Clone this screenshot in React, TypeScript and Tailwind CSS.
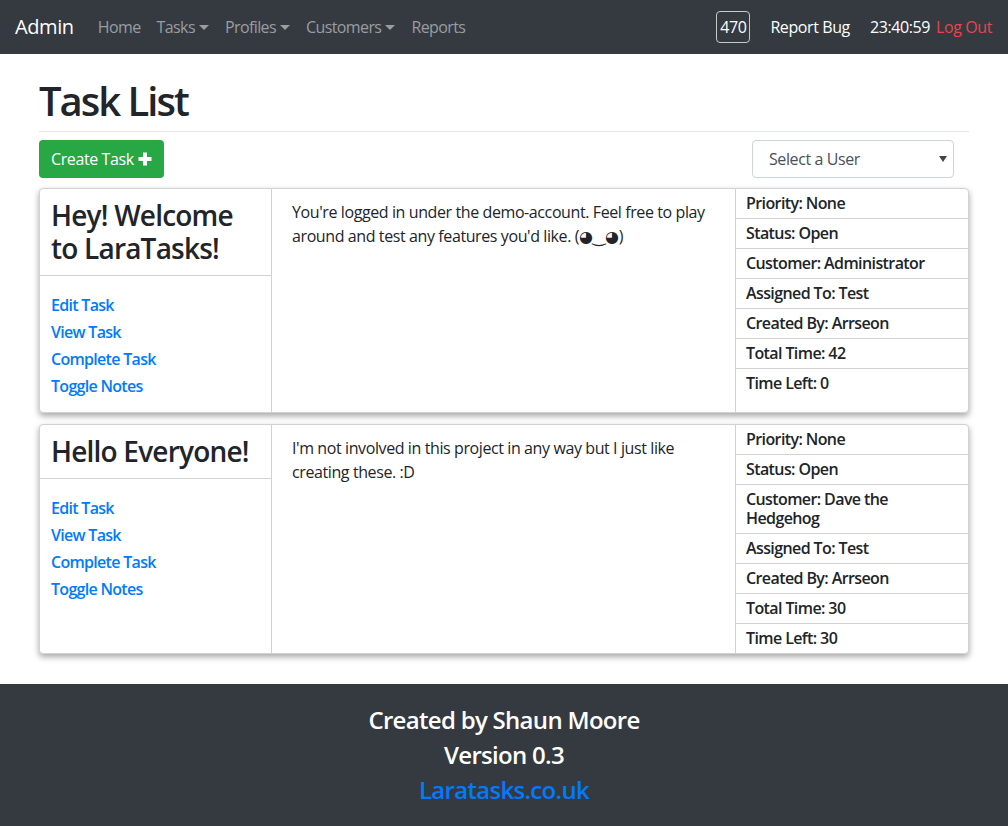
import React from "react";

type Task = {
  title: string;
  body: string;
  meta: string[];
};

const tasks: Task[] = [
  {
    title: "Hey! Welcome to LaraTasks!",
    body: "You're logged in under the demo-account. Feel free to play around and test any features you'd like. (◕‿◕)",
    meta: [
      "Priority: None",
      "Status: Open",
      "Customer: Administrator",
      "Assigned To: Test",
      "Created By: Arrseon",
      "Total Time: 42",
      "Time Left: 0",
    ],
  },
  {
    title: "Hello Everyone!",
    body: "I'm not involved in this project in any way but I just like creating these. :D",
    meta: [
      "Priority: None",
      "Status: Open",
      "Customer: Dave the Hedgehog",
      "Assigned To: Test",
      "Created By: Arrseon",
      "Total Time: 30",
      "Time Left: 30",
    ],
  },
];

const Caret = () => (
  <span className="ml-[4px] inline-block h-0 w-0 border-x-[5px] border-t-[5px] border-x-transparent border-t-current align-[3px]" />
);

const Navbar: React.FC = () => (
  <nav className="flex h-[54px] items-center bg-[#343a40] pl-[15px] pr-4">
    <div className="mr-4 text-[20px] text-white">Admin</div>
    <ul className="flex items-center text-[16px] tracking-[-0.6px] text-[#9a9da0]">
      <li className="px-2">Home</li>
      <li className="px-2">
        Tasks
        <Caret />
      </li>
      <li className="px-2">
        Profiles
        <Caret />
      </li>
      <li className="px-2">
        Customers
        <Caret />
      </li>
      <li className="px-2">Reports</li>
    </ul>
    <div className="ml-auto flex items-center text-[16px] text-white">
      <span className="flex h-[32px] w-[34px] items-center justify-center rounded-[4px] border border-[#c8c9cb]">
        470
      </span>
      <span className="ml-5">Report Bug</span>
      <span className="ml-5">23:40:59</span>
      <span className="ml-[6px] text-[#e3474d]">Log Out</span>
    </div>
  </nav>
);

const TaskCard: React.FC<{ task: Task }> = ({ task }) => (
  <div className="mb-[11px] flex rounded-[4px] border border-[#d2d2d2] bg-white shadow-[0_3px_6px_rgba(0,0,0,0.35)]">
    <div className="w-1/4 border-r border-[#d2d2d2]">
      <h3 className="border-b border-[#d2d2d2] px-[11px] py-[10px] text-[28px] font-semibold leading-[33px] tracking-[-0.8px] text-[#212529]">
        {task.title}
      </h3>
      <div className="flex flex-col px-[11px] pb-3 pt-[16px] text-[16px] font-semibold tracking-[-0.7px] text-[#007bff]">
        <a className="leading-[27px]">Edit Task</a>
        <a className="leading-[27px]">View Task</a>
        <a className="leading-[27px]">Complete Task</a>
        <a className="leading-[27px]">Toggle Notes</a>
      </div>
    </div>
    <p className="w-1/2 border-r border-[#d2d2d2] px-5 pt-[11px] font-['Open_Sans','DejaVu_Sans',sans-serif] text-[16px] leading-[24px] text-[#212529]">
      {task.body}
    </p>
    <ul className="w-1/4 text-[16px] font-semibold leading-[19px] tracking-[-0.6px] text-[#212529]">
      {task.meta.map((m, i) => (
        <li
          key={m}
          className={
            i < task.meta.length - 1
              ? "border-b border-[#d2d2d2] px-[10px] py-[5px]"
              : "px-[10px] py-[5px]"
          }
        >
          {m}
        </li>
      ))}
    </ul>
  </div>
);

export default function App() {
  return (
    <div className="min-h-screen bg-white font-['Open_Sans',sans-serif] tracking-[-0.4px]">
      <Navbar />
      <main className="mx-auto w-[930px] pb-[19px] pt-[23px]">
        <h1 className="text-[40px] font-semibold leading-[48px] tracking-[-2px] text-[#212529]">
          Task List
        </h1>
        <hr className="mt-[6px] border-[#e5e5e5]" />
        <div className="mb-[10px] mt-2 flex items-center justify-between">
          <button className="flex h-[38px] items-center gap-1 rounded-[4px] bg-[#28a745] px-3 text-[16px] text-white">
            Create Task
            <svg width="14" height="14" viewBox="0 0 14 14" fill="white">
              <path d="M5 0.5h4v4.5h4.5v4H9v4.5H5V9H0.5V5H5z" />
            </svg>
          </button>
          <div className="relative mr-[15px] flex h-[38px] w-[202px] items-center rounded-[4px] border border-[#ced4da] pl-4 text-[16px] text-[#495057]">
            Select a User
            <span className="absolute right-[6px] top-[15px] h-0 w-0 border-x-[4px] border-t-[6px] border-x-transparent border-t-[#444]" />
          </div>
        </div>
        {tasks.map((t) => (
          <TaskCard key={t.title} task={t} />
        ))}
      </main>
      <footer className="bg-[#343a40] pb-[20px] pt-[18px] text-center text-[24px] font-semibold leading-[35px] tracking-[-0.7px] text-white">
        <div>Created by Shaun Moore</div>
        <div>Version 0.3</div>
        <div className="text-[#007bff]">Laratasks.co.uk</div>
      </footer>
    </div>
  );
}
